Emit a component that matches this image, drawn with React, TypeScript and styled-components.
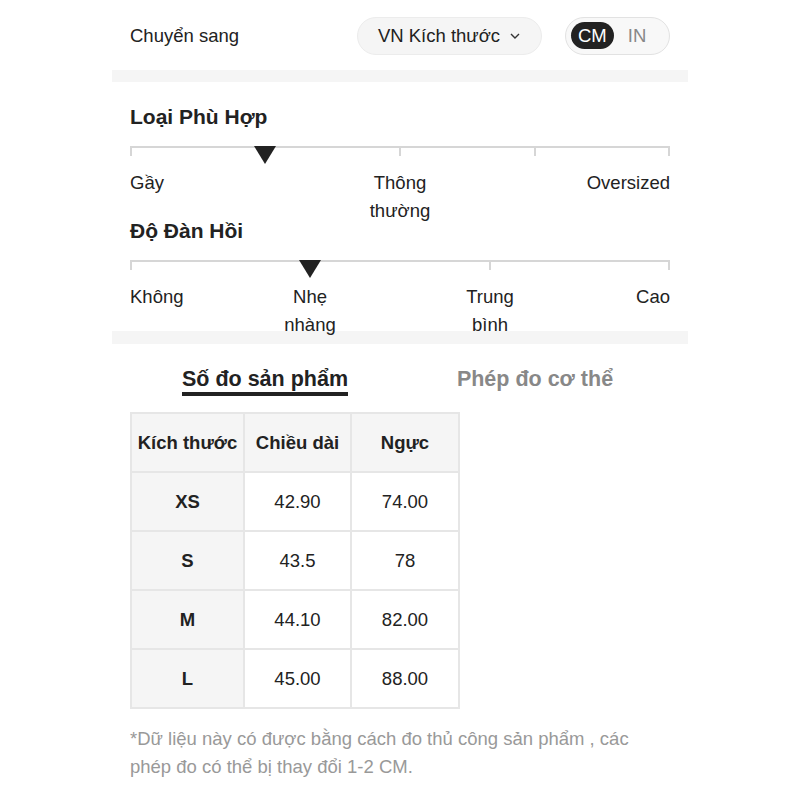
import React from "react";
import styled, { createGlobalStyle } from "styled-components";

const GlobalStyle = createGlobalStyle`
  body {
    margin: 0;
    background: #fff;
    font-family: "Liberation Sans", Arial, sans-serif;
    color: #222;
  }
`;

type SliderModel = {
  title: string;
  ticks: number;
  value: number;
  labels: string[];
};

const sliders: SliderModel[] = [
  { title: "Loại Phù Hợp", ticks: 5, value: 25, labels: ["Gầy", "Thông thường", "Oversized"] },
  { title: "Độ Đàn Hồi", ticks: 4, value: 100 / 3, labels: ["Không", "Nhẹ nhàng", "Trung bình", "Cao"] },
];

const rows = [
  { size: "XS", length: "42.90", chest: "74.00" },
  { size: "S", length: "43.5", chest: "78" },
  { size: "M", length: "44.10", chest: "82.00" },
  { size: "L", length: "45.00", chest: "88.00" },
];

const Slider = (props: SliderModel & { first: boolean }): React.ReactElement => {
  const n = props.labels.length;
  const cols = ["1fr", ...Array(n - 2).fill("2fr"), "1fr"].join(" ");
  return (
    <SliderGroup $first={props.first}>
      <SectionTitle>{props.title}</SectionTitle>
      <Track>
        <Ticks>
          {Array.from({ length: props.ticks }).map((_, i) => (
            <Tick key={i} />
          ))}
        </Ticks>
        <Marker style={{ left: `${props.value}%` }} />
      </Track>
      <Labels style={{ gridTemplateColumns: cols }}>
        {props.labels.map((l, i) => (
          <Label key={l} $align={i === 0 ? "start" : i === n - 1 ? "end" : "center"}>
            {l}
          </Label>
        ))}
      </Labels>
    </SliderGroup>
  );
};

const App = (): React.ReactElement => {
  return (
    <Page>
      <GlobalStyle />
      <Header>
        <HeaderLabel>Chuyển sang</HeaderLabel>
        <Controls>
          <Dropdown>
            VN Kích thước
            <svg width="12" height="8" viewBox="0 0 12 8">
              <path d="M2 2 L6 6 L10 2" fill="none" stroke="#333" strokeWidth="1.4" />
            </svg>
          </Dropdown>
          <UnitToggle>
            <Unit $active>CM</Unit>
            <Unit>IN</Unit>
          </UnitToggle>
        </Controls>
      </Header>
      <Band $h={12} />
      <FitSection>
        {sliders.map((s, i) => (
          <Slider key={s.title} {...s} first={i === 0} />
        ))}
      </FitSection>
      <Band $h={13} />
      <Tabs>
        <TabCell>
          <Tab $active>Số đo sản phẩm</Tab>
        </TabCell>
        <TabCell>
          <Tab>Phép đo cơ thể</Tab>
        </TabCell>
      </Tabs>
      <Table>
        <colgroup>
          <col style={{ width: 113 }} />
          <col style={{ width: 107 }} />
          <col style={{ width: 108 }} />
        </colgroup>
        <thead>
          <tr>
            <Th>Kích thước</Th>
            <Th>Chiều dài</Th>
            <Th>Ngực</Th>
          </tr>
        </thead>
        <tbody>
          {rows.map((r) => (
            <tr key={r.size}>
              <SizeCell>{r.size}</SizeCell>
              <Td>{r.length}</Td>
              <Td>{r.chest}</Td>
            </tr>
          ))}
        </tbody>
      </Table>
      <Note>
        *Dữ liệu này có được bằng cách đo thủ công sản phẩm , các phép đo có thể bị thay đổi 1-2 CM.
      </Note>
    </Page>
  );
};

export default App;

const Page = styled.div`
  width: 576px;
  margin: 0 auto;
`;

const Header = styled.div`
  height: 70px;
  padding: 0 18px;
  display: flex;
  align-items: center;
`;

const HeaderLabel = styled.div`
  font-size: 18.5px;
  padding-top: 1px;
`;

const Controls = styled.div`
  margin-left: auto;
  display: flex;
  align-items: center;
  gap: 23px;
`;

const Dropdown = styled.div`
  box-sizing: border-box;
  width: 185px;
  height: 38px;
  margin-top: 1px;
  border-radius: 19px;
  background: #f5f5f5;
  border: 1px solid #ececec;
  display: flex;
  align-items: center;
  justify-content: center;
  gap: 9px;
  font-size: 18.5px;
  color: #222;
`;

const UnitToggle = styled.div`
  box-sizing: border-box;
  width: 105px;
  height: 38px;
  margin-top: 1px;
  border-radius: 19px;
  background: #f8f8f8;
  border: 1px solid #e2e2e2;
  display: flex;
  align-items: center;
  padding: 0 5px;
  gap: 14px;
`;

const Unit = styled.div<{ $active?: boolean }>`
  height: 27px;
  padding: 0 ${(p) => (p.$active ? "7px" : "0")};
  border-radius: 14px;
  display: flex;
  align-items: center;
  font-size: 18.5px;
  background: ${(p) => (p.$active ? "#222" : "transparent")};
  color: ${(p) => (p.$active ? "#fff" : "#888")};
`;

const Band = styled.div<{ $h: number }>`
  height: ${(p) => p.$h}px;
  background: #f5f5f5;
`;

const FitSection = styled.div`
  padding: 23px 18px 0;
`;

const SliderGroup = styled.div<{ $first: boolean }>`
  margin-top: ${(p) => (p.$first ? 0 : 2)}px;
`;

const SectionTitle = styled.div`
  font-size: 21px;
  font-weight: bold;
  line-height: 24px;
  color: #222;
`;

const Track = styled.div`
  position: relative;
  margin-top: 17px;
  height: 23px;
`;

const Ticks = styled.div`
  display: flex;
  justify-content: space-between;
  border-top: 2px solid #d6d6d6;
`;

const Tick = styled.div`
  width: 2px;
  height: 8px;
  background: #d6d6d6;
`;

const Marker = styled.div`
  position: absolute;
  top: 0;
  width: 0;
  height: 0;
  transform: translateX(-50%);
  border-left: 11px solid transparent;
  border-right: 11px solid transparent;
  border-top: 18px solid #222;
`;

const Labels = styled.div`
  display: grid;
  height: 48px;
  font-size: 18.5px;
  line-height: 28px;
  color: #222;
`;

const Label = styled.div<{ $align: "start" | "center" | "end" }>`
  width: min-content;
  justify-self: ${(p) => p.$align};
  text-align: ${(p) => (p.$align === "center" ? "center" : p.$align === "end" ? "right" : "left")};
`;

const Tabs = styled.div`
  display: grid;
  grid-template-columns: 1fr 1fr;
  padding: 23px 18px 0;
`;

const TabCell = styled.div`
  display: flex;
  justify-content: center;
`;

const Tab = styled.div<{ $active?: boolean }>`
  font-size: 21.5px;
  font-weight: bold;
  line-height: 24px;
  padding-bottom: 1px;
  color: ${(p) => (p.$active ? "#222" : "#888")};
  border-bottom: 4px solid ${(p) => (p.$active ? "#222" : "transparent")};
`;

const Table = styled.table`
  margin: 16px 18px 0;
  width: 328px;
  table-layout: fixed;
  border-collapse: collapse;
  font-size: 18.5px;
  color: #222;
`;

const Th = styled.th`
  height: 57px;
  padding: 0;
  border: 2px solid #e6e6e6;
  background: #f5f5f5;
  font-weight: bold;
  text-align: center;
  white-space: nowrap;
`;

const Td = styled.td`
  height: 57px;
  padding: 0;
  border: 2px solid #e6e6e6;
  text-align: center;
`;

const SizeCell = styled(Td)`
  background: #f5f5f5;
  font-weight: bold;
`;

const Note = styled.div`
  margin-top: 16px;
  padding: 0 18px;
  width: 510px;
  font-size: 18.5px;
  line-height: 28px;
  color: #999;
`;
